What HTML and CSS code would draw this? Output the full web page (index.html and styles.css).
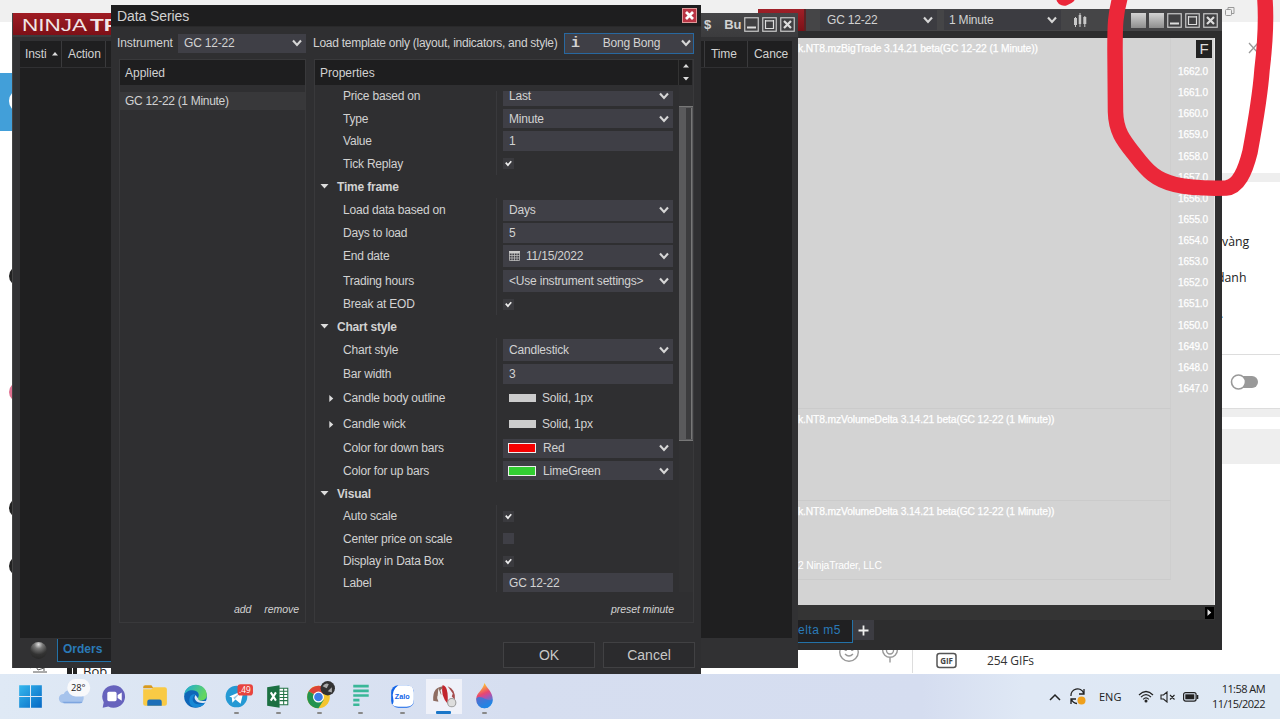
FILE: index.html
```html
<!DOCTYPE html>
<html lang="en">
<head>
<meta charset="utf-8">
<title>Data Series</title>
<link rel="stylesheet" href="styles.css">
</head>
<body>
<svg class="defs" width="0" height="0">
  <defs>
    <symbol id="chev" viewBox="0 0 10 8"><path d="M1 1.500 L5 6 L9 1.500" fill="none" stroke="#d6d6d6" stroke-width="2.100"/></symbol>
    <symbol id="check" viewBox="0 0 10 10"><path d="M2.500 4.200 L4.500 6.500 L7.500 3" fill="none" stroke="#eee" stroke-width="1.500"/></symbol>
    <symbol id="down" viewBox="0 0 8 5"><path d="M0 0H8L4 4.500Z" fill="#ddd"/></symbol>
    <symbol id="right" viewBox="0 0 5 8"><path d="M0 0V8L4.500 4Z" fill="#ddd"/></symbol>
    <symbol id="wmin" viewBox="0 0 15 15"><rect x=".75" y=".75" width="13.500" height="13.500" fill="#404042" stroke="#c9c9c9" stroke-width="1.200"/><path d="M3 10.500h9" stroke="#ddd" stroke-width="2"/></symbol>
    <symbol id="wmax" viewBox="0 0 15 15"><rect x=".75" y=".75" width="13.500" height="13.500" fill="#404042" stroke="#c9c9c9" stroke-width="1.200"/><path d="M3.500 3v8.500h8V3M3 3.800h9" fill="none" stroke="#ddd" stroke-width="1.200"/></symbol>
    <symbol id="wclose" viewBox="0 0 15 15"><rect x=".75" y=".75" width="13.500" height="13.500" fill="#404042" stroke="#c9c9c9" stroke-width="1.200"/><path d="M4 4l7 7M11 4l-7 7" stroke="#ddd" stroke-width="2.200"/></symbol>
  </defs>
</svg>
<div class="desktop">
  <div class="page-left">
    <div class="page-top"></div>
    <div class="blue-tile"><i></i></div>
    <i class="dot d1"></i><i class="dot d2"></i><i class="dot d3"></i><i class="dot d4"></i>
    <div class="contact">
      <svg width="18" height="12" viewBox="0 0 18 12"><path d="M0 5l5-3 3 5 6-2v3M3 9h14" fill="none" stroke="#555" stroke-width="1"/></svg>
      <svg class="horn" width="12" height="14" viewBox="0 0 12 14"><path d="M0 4h2l3-3v12l-3-3H0zM6 1h4v12H6z" fill="#222"/></svg>
      <span>Bob</span>
    </div>
    <div class="composer">
      <svg width="22" height="22" viewBox="0 0 22 22" fill="none" stroke="#999" stroke-width="1.400"><circle cx="11" cy="11" r="9.300"/><path d="M7 13q4 4 8 0"/><circle cx="7.800" cy="8.500" r=".8"/><circle cx="14.200" cy="8.500" r=".8"/></svg>
      <svg class="mic" width="18" height="22" viewBox="0 0 18 22" fill="none" stroke="#999" stroke-width="1.400"><rect x="5.500" y="0" width="7" height="13" rx="3.500"/><path d="M1.500 8c0 11 15 11 15 0M9 16.500v5"/></svg>
      <div class="gifs">
        <svg width="22" height="17" viewBox="0 0 22 17"><rect x="1" y="1.500" width="19" height="14" rx="2.500" fill="none" stroke="#555" stroke-width="1.500"/><text x="10.500" y="12" text-anchor="middle" class="gif-text">GIF</text></svg>
        <span>254 GIFs</span>
      </div>
    </div>
  </div>
  <div class="page-right">
    <div class="r-top"><svg width="12" height="11" viewBox="0 0 12 11" fill="none" stroke="#999"><rect x="1.500" y="3.500" width="6" height="6" rx="1"/><path d="M4 3V1.500h6v6H8"/></svg></div>
    <div class="r-close"><svg width="12" height="12" viewBox="0 0 12 12"><path d="M2 1l9 10M2 11l9-10" stroke="#999" stroke-width="1.300"/></svg></div>
    <div class="r-band"></div>
    <div class="r-text"><p>vàng</p><p class="cut">danh</p><p class="stop">.</p></div>
    <div class="r-toggle"><svg width="30" height="18" viewBox="0 0 30 18"><rect x="8" y="3" width="20" height="12" rx="6" fill="#999"/><circle cx="8.500" cy="9" r="7" fill="#fff" stroke="#999" stroke-width="1.600"/></svg></div>
    <div class="r-strip"></div>
    <div class="r-block"></div>
  </div>

  <section class="win chart-win">
    <header class="chart-bar">
      <div class="red-cap"></div>
      <div class="cb-sel s1"><span>GC 12-22</span><svg width="10" height="8"><use href="#chev"/></svg></div>
      <div class="cb-sel s2"><span>1 Minute</span><svg width="10" height="8"><use href="#chev"/></svg></div>
      <svg class="bars" width="14" height="16" viewBox="0 0 14 16" fill="#c8c8c8"><rect x="1" y="6" width="3" height="7"/><rect x="5.700" y="3" width="2.500" height="9"/><rect x="10.300" y="5" width="3" height="7"/><path d="M2 5h1v10H2zM6.500 1h1v14h-1zM11.300 4h1v11h-1z"/></svg>
      <div class="cb-btns"><i></i><i></i><svg><use href="#wmin"/></svg><svg><use href="#wmax"/></svg><svg><use href="#wclose"/></svg></div>
    </header>
    <div class="chart">
      <div class="plots">
        <div class="plot p1"><b>k.NT8.mzBigTrade 3.14.21 beta(GC 12-22 (1 Minute))</b></div>
        <div class="plot p2"><b>k.NT8.mzVolumeDelta 3.14.21 beta(GC 12-22 (1 Minute))</b></div>
        <div class="plot p3"><b>k.NT8.mzVolumeDelta 3.14.21 beta(GC 12-22 (1 Minute))</b><span>2 NinjaTrader, LLC</span></div>
      </div>
      <div class="axis">
        <div class="fix">F</div>
        <div class="prices"><b>1662.0</b><b>1661.0</b><b>1660.0</b><b>1659.0</b><b>1658.0</b><b>1657.0</b><b>1656.0</b><b>1655.0</b><b>1654.0</b><b>1653.0</b><b>1652.0</b><b>1651.0</b><b>1650.0</b><b>1649.0</b><b>1648.0</b><b>1647.0</b></div>
      </div>
    </div>
    <div class="hscroll"><i><svg width="5" height="7" viewBox="0 0 5 8"><use href="#right"/></svg></i></div>
    <div class="chart-tabs"><div class="ctab">elta m5</div><div class="plus"><svg width="11" height="11" viewBox="0 0 11 11"><path d="M5.500 .5v10M.5 5.500h10" stroke="#eee" stroke-width="1.800"/></svg></div></div>
  </section>

  <section class="win orders-win">
    <header class="orders-bar">
      <div class="brand"><svg width="140" height="22"><text x="9" y="17.500" class="brand-text" textLength="65" lengthAdjust="spacingAndGlyphs">NINJA</text><text x="77" y="17.500" class="brand-text bold" textLength="30" lengthAdjust="spacingAndGlyphs">TR</text></svg></div>
      <div class="acct"><span>$</span><span>Bu</span></div>
      <div class="wbtns"><svg><use href="#wmin"/></svg><svg><use href="#wmax"/></svg><svg><use href="#wclose"/></svg></div>
    </header>
    <div class="grid-area">
      <div class="cols"><span class="c1">Insti <svg width="6" height="4" viewBox="0 0 6 4"><path d="M0 3.500L3 0l3 3.500z" fill="#ddd"/></svg></span><span class="c2">Action</span><span class="gap"></span><span class="c3">Time</span><span class="c4">Cance</span></div>
    </div>
    <footer class="orders-tabs"><div class="ball"></div><div class="otab">Orders</div></footer>
  </section>

  <section class="win dialog">
    <header class="dlg-title"><span>Data Series</span><div class="dclose"><svg width="15" height="15" viewBox="0 0 15 15"><path d="M4 4l7 7M11 4l-7 7" stroke="#fff" stroke-width="2.800"/></svg></div></header>
    <div class="dlg-top">
      <span class="inst">Instrument</span>
      <div class="sel inst-sel"><span>GC 12-22</span><svg width="10" height="8"><use href="#chev"/></svg></div>
      <span class="tmpl">Load template only (layout, indicators, and style)</span>
      <div class="sel tmpl-sel"><em>i</em><span>Bong Bong</span><svg width="10" height="8"><use href="#chev"/></svg></div>
    </div>
    <div class="panels">
      <div class="panel applied">
        <div class="phead">Applied</div>
        <div class="item">GC 12-22 (1 Minute)</div>
        <div class="links"><i>add</i><i>remove</i></div>
      </div>
      <div class="panel props">
        <div class="phead"><span>Properties</span><div class="spin"><svg width="6" height="4" viewBox="0 0 6 4"><path d="M0 3.500L3 0l3 3.500z" fill="#ddd"/></svg><svg width="6" height="4" viewBox="0 0 6 4"><path d="M0 0h6L3 3.500z" fill="#ddd"/></svg></div></div>
        <div class="pbody">
          <div class="rows">
            <div class="inner">
              <div class="row h23"><label>Price based on</label><div class="fld"><div class="box b20">Last<svg><use href="#chev"/></svg></div></div></div>
              <div class="row h23"><label>Type</label><div class="fld"><div class="box b19">Minute<svg><use href="#chev"/></svg></div></div></div>
              <div class="row h22"><label>Value</label><div class="fld"><div class="box b20">1</div></div></div>
              <div class="row h23"><label>Tick Replay</label><div class="fld"><div class="cb"><svg><use href="#check"/></svg></div></div></div>
              <div class="row h23 head"><svg><use href="#down"/></svg><b>Time frame</b></div>
              <div class="row h24"><label>Load data based on</label><div class="fld"><div class="box b21">Days<svg><use href="#chev"/></svg></div></div></div>
              <div class="row h22"><label>Days to load</label><div class="fld"><div class="box b20">5</div></div></div>
              <div class="row h24"><label>End date</label><div class="fld"><div class="box b22"><svg class="cal" viewBox="0 0 11 10"><path d="M0 0h11v2.500H0z" fill="#ccc"/><path d="M.5 1v8.500h10V1M0 4.500h11M0 7h11M3 2v8M5.500 2v8M8 2v8" stroke="#bbb" stroke-width=".8" fill="none"/></svg>11/15/2022<svg><use href="#chev"/></svg></div></div></div>
              <div class="row h25"><label>Trading hours</label><div class="fld"><div class="box b22"><span>&lt;Use instrument settings&gt;</span><svg><use href="#chev"/></svg></div></div></div>
              <div class="row h22"><label>Break at EOD</label><div class="fld"><div class="cb"><svg><use href="#check"/></svg></div></div></div>
              <div class="row h23 head"><svg><use href="#down"/></svg><b>Chart style</b></div>
              <div class="row h24"><label>Chart style</label><div class="fld"><div class="box b22">Candlestick<svg><use href="#chev"/></svg></div></div></div>
              <div class="row h23"><label>Bar width</label><div class="fld"><div class="box b20">3</div></div></div>
              <div class="row h26 sub"><svg><use href="#right"/></svg><label>Candle body outline</label><div class="fld"><i class="sw line"></i>Solid, 1px</div></div>
              <div class="row h26 sub"><svg><use href="#right"/></svg><label>Candle wick</label><div class="fld"><i class="sw line"></i>Solid, 1px</div></div>
              <div class="row h22"><label>Color for down bars</label><div class="fld"><div class="box b19"><i class="sw red"></i>Red<svg><use href="#chev"/></svg></div></div></div>
              <div class="row h23"><label>Color for up bars</label><div class="fld"><div class="box b19"><i class="sw lime"></i>LimeGreen<svg><use href="#chev"/></svg></div></div></div>
              <div class="row h23 head"><svg><use href="#down"/></svg><b>Visual</b></div>
              <div class="row h22"><label>Auto scale</label><div class="fld"><div class="cb"><svg><use href="#check"/></svg></div></div></div>
              <div class="row h23"><label>Center price on scale</label><div class="fld"><div class="cb off"></div></div></div>
              <div class="row h22"><label>Display in Data Box</label><div class="fld"><div class="cb"><svg><use href="#check"/></svg></div></div></div>
              <div class="row h22"><label>Label</label><div class="fld"><div class="box b20">GC 12-22</div></div></div>
            </div>
          </div>
          <div class="vscroll"><div class="thumb"><i></i></div></div>
        </div>
        <div class="links preset"><i>preset minute</i></div>
      </div>
    </div>
    <div class="actions"><button>OK</button><button>Cancel</button></div>
  </section>

  <footer class="taskbar">
    <div class="apps">
      <div class="app"><svg viewBox="0 0 32 32"><defs><linearGradient id="w" x2="1" y2="1"><stop stop-color="#35b8ee"/><stop offset="1" stop-color="#0668c4"/></linearGradient></defs><path d="M5 5h10.500v10.500H5zM16.500 5H27v10.500H16.500zM5 16.500h10.500V27H5zM16.500 16.500H27V27H16.500z" fill="url(#w)"/></svg></div>
      <div class="app"><svg viewBox="0 0 32 32"><path d="M8 22.500a4.500 4.500 0 0 1 .5-9 7 7 0 0 1 12-1 5 5 0 0 1 4 10z" fill="#a6c3ec"/><path d="M7 21h20q-1 1.500-3 1.500H9z" fill="#7da5df"/><rect x="12" y="-1" width="22" height="17" rx="8" fill="#f8f9fb"/><text x="15.500" y="10.500" class="deg">28°</text></svg></div>
      <div class="app"><svg viewBox="0 0 32 32"><path d="M16 5a11 11 0 1 1-5 20.700L5.500 27l1-5.500A11 11 0 0 1 16 5" fill="#6763bd"/><rect x="10" y="11.500" width="9" height="9" rx="1.500" fill="#fff"/><path d="M20 14.500l4-2.500v8l-4-2.500z" fill="#fff"/></svg></div>
      <div class="app"><svg viewBox="0 0 32 32"><path d="M5 7q0-2 2-2h6l2 3H5z" fill="#d99a1d"/><path d="M5 9h8l2-2h11q2 0 2 2v14q0 2-2 2H7q-2 0-2-2z" fill="#f9ca45"/><path d="M9 25v-4q0-2 2-2h10q2 0 2 2v4z" fill="#1d6fb8"/></svg></div>
      <div class="app"><svg viewBox="0 0 32 32"><defs><linearGradient id="e" x2="1" y2=".4"><stop stop-color="#1aa9dd"/><stop offset="1" stop-color="#64d65e"/></linearGradient></defs><circle cx="16" cy="16" r="11" fill="#0e66b8"/><path d="M5 15C6 1 27 1 27 15c0 6-10 6-9 3 3-4 0-8-5-8-4 0-7 2-8 5" fill="url(#e)"/><path d="M16 14c-6 4-2 13 9 8l-1 2c-5 4-14 3-14-4 0-5 3-7 6-6" fill="#1789d6"/><path d="M16 14.500c-3 4 2 9 9 7.500l2-2c-5 1-9 0-8.500-2z" fill="#dce6f4"/></svg></div>
      <div class="app run"><svg viewBox="0 0 32 32"><circle cx="15" cy="16" r="10.500" fill="#2599d4"/><path d="M8 16l14-6-3 13-5-4-3 3-.5-5z" fill="#fff"/><path d="M12 17l7-5-6 7z" fill="#9fc8e4"/><rect x="16" y="4" width="15" height="11" rx="3" fill="#e8433e"/><text x="17.500" y="12.500" class="badge">.49</text></svg></div>
      <div class="app run"><svg viewBox="0 0 32 32"><path d="M16 8h9v16h-9z" fill="#fff" stroke="#237346"/><path d="M17 11h8M17 14h8M17 17h8M17 20h8M21 8v16" stroke="#237346"/><path d="M5 7l12-2v22L5 25z" fill="#1c7042"/><path d="M8.500 12l5 8M13.500 12l-5 8" stroke="#fff" stroke-width="2"/></svg></div>
      <div class="app run"><svg viewBox="0 0 32 32"><circle cx="15" cy="16.500" r="11" fill="#f4c52e"/><path d="M15 16.500L5.500 11A11 11 0 0 1 24.500 11z" fill="#dc4437"/><path d="M5.500 11A11 11 0 0 0 15 27.500l5-8-5-3z" fill="#23934f"/><circle cx="15" cy="16.500" r="5.300" fill="#fff"/><circle cx="15" cy="16.500" r="4.200" fill="#3c7be6"/><circle cx="24" cy="8" r="7" fill="#333"/><path d="M19 6q3-4 6-2l-2 4zM24 11l4-4v5z" fill="#aaa"/></svg></div>
      <div class="app run"><svg viewBox="0 0 32 32"><path d="M8 6h15M8 10.500h15M8 15h15M8 19.500h6M8 24h6" stroke="#3ab798" stroke-width="2.600"/></svg></div>
      <div class="app run"><svg viewBox="0 0 32 32"><rect x="5" y="5" width="22" height="22" rx="7" fill="#1264e8"/><path d="M12 5h8q7 0 7 7v7q0 7-7 7h-8q-4 0-6-2 2-2 1-6 -2-8 5-13" fill="#fff"/><text x="8.500" y="18.500" class="zalo">Zalo</text></svg></div>
      <div class="app run active"><svg viewBox="0 0 32 32"><path d="M6 20Q5 6 17 6l-4 4 1 4-4 2 1 5z" fill="#8f6d62"/><path d="M15 5q6 0 5 18-7-8-5-18" fill="#c2252e"/><path d="M20 6q8 3 7 13l-3-3 1-3z" fill="#a64d4e"/><path d="M11 8l4 10-5 1z" fill="#eee"/><circle cx="24" cy="22" r="4" fill="#ddd" stroke="#999"/></svg></div>
      <div class="app run"><svg viewBox="0 0 32 32"><defs><linearGradient id="p" x2=".3" y2="1"><stop offset=".15" stop-color="#ffc52f"/><stop offset=".5" stop-color="#e9476f"/><stop offset=".65" stop-color="#b94fa8"/><stop offset="1" stop-color="#1697ef"/></linearGradient></defs><path d="M16 3c3 6 8 9 8 16a8 8.500 0 0 1-16 0c0-7 6-8 8-16" fill="url(#p)"/><path d="M8 18c5-5 10 4 16 1a8 8.500 0 0 1-16 0" fill="#267fe0" opacity=".75"/></svg></div>
    </div>
    <div class="tray">
      <svg width="12" height="8" viewBox="0 0 12 8"><path d="M1 7l5-5 5 5" fill="none" stroke="#222" stroke-width="1.500"/></svg>
      <svg class="sync" width="18" height="18" viewBox="0 0 18 18"><path d="M2 8A6.500 6.500 0 0 1 14.500 5M15 1v5h-5M8 15.500Q4 15 2.500 11.500M2 16v-5h5" fill="none" stroke="#222" stroke-width="1.300"/><circle cx="12.500" cy="12.500" r="4" fill="#efa01c"/></svg>
      <span class="lang">ENG</span>
      <svg class="wifi" width="16" height="13" viewBox="0 0 16 13" fill="none" stroke="#222" stroke-width="1.200"><path d="M1 5q7-7 14 0M3 7.200q5-5 10 0M5.200 9.300q2.800-2.800 5.600 0"/><circle cx="8" cy="11" r=".9" fill="#222"/></svg>
      <svg class="vol" width="16" height="12" viewBox="0 0 16 12" fill="none" stroke="#222" stroke-width="1.100"><path d="M1 4h2.500L7 1v10L3.500 8H1zM10 4l4.500 4.500M14.500 4L10 8.500"/></svg>
      <svg class="bat" width="16" height="10" viewBox="0 0 16 10"><rect x=".6" y=".6" width="12.500" height="8.500" rx="2" fill="none" stroke="#222" stroke-width="1.200"/><rect x="2.300" y="2.300" width="9" height="5" fill="#222"/><path d="M14.500 3v4" stroke="#222" stroke-width="1.600"/></svg>
      <div class="clock"><span>11:58 AM</span><span>11/15/2022</span></div>
    </div>
  </footer>
  <svg class="scribble" width="1280" height="240" viewBox="0 0 1280 240" fill="none" stroke="#eb2739" stroke-width="15.500" stroke-linecap="round" stroke-linejoin="round"><path d="M1121 -6C1115 15 1115 25 1115 50L1115.500 112C1116 132 1124 141 1135 155C1148 172 1156 180 1175 184.500C1190 188 1208 188.500 1226 188C1238 187 1245 172 1250 152C1255 125 1260 98 1262 70C1265 45 1267 20 1264.500 -6"/><path d="M1064 -2L1068 -4"/></svg>
</div>
</body>
</html>
```
FILE: styles.css
```css
* { box-sizing: border-box; }
body { margin: 0; font-family: "Liberation Sans", Arial, sans-serif; font-size: 12px; color: #d2d2d2; }
.defs { position: absolute; }
.desktop { position: relative; width: 1280px; height: 719px; overflow: hidden; background: #fff; }
.win { position: absolute; display: flex; flex-direction: column; overflow: hidden; }
svg { display: block; flex: none; }

/* page behind the windows */
.page-left { position: absolute; inset: 0; }
.page-top { height: 22px; background: #f0f0f0; }
.blue-tile { width: 12px; height: 58px; margin-top: 51px; padding: 17px 0 0 9px; background: #429fd9; overflow: hidden; }
.blue-tile i { display: block; width: 20px; height: 22px; border-radius: 50%; background: #fff; }
.dot { position: absolute; left: 9px; width: 20px; height: 20px; border-radius: 50%; background: #222; }
.d1 { top: 266px; } .d2 { top: 382px; background: #e07090; } .d3 { top: 498px; } .d4 { top: 556px; }
.contact { position: absolute; left: 30px; top: 663px; display: flex; color: #222; font: 13px/16px "Open Sans", sans-serif; }
.horn { margin: 1px 4px 0 19px; }
.composer { position: absolute; left: 838px; top: 641px; display: flex; height: 32px; }
.mic { margin-left: 21px; }
.gifs { display: flex; align-items: center; gap: 29px; margin-left: 13px; padding: 6px 0 0 23px; border-left: 1px solid #ddd; color: #333; font: 12px "Open Sans", sans-serif; letter-spacing: -.1px; }
.gif-text { font: bold 8px "Open Sans", sans-serif; fill: #444; }
.page-right { position: absolute; left: 1222px; top: 0; width: 58px; height: 674px; background: #fff; color: #222; font: 12.300px/18px "Open Sans", sans-serif; }
.r-top { height: 22px; padding: 6px 2px; background: #f0f0f0; }
.r-close { height: 151px; padding: 20px 0 0 25px; }
.r-band { height: 9px; background: #eee; }
.r-text { height: 173px; padding-top: 51px; border-bottom: 1px solid #ddd; }
.r-text p { margin: 0 0 18px; }
.r-text .cut { margin-left: -5px; }
.r-text .stop { margin-left: -2px; }
.r-toggle { height: 53px; padding: 18px 8px; }
.r-strip { height: 9px; background: #eee; border-top: 1px solid #ddd; }
.r-block { height: 35px; margin-top: 12px; background: #eee; }

/* chart window */
.chart-win { left: 758px; top: 9px; width: 464px; height: 641px; background: #2d2d2e; }
.chart-bar { display: flex; align-items: center; height: 22px; background: #454547; letter-spacing: -.2px; }
.red-cap { width: 48px; height: 22px; background: linear-gradient(#a02028, #7d1117); border-right: 2px solid #5c2224; }
.cb-sel { display: flex; align-items: center; justify-content: space-between; height: 20px; background: #3c3c41; padding: 0 4px 0 6px; }
.s1 { width: 117px; margin-left: 14px; padding-left: 7px; }
.s2 { width: 117px; margin-left: 7px; padding-left: 5px; }
.bars { margin-left: 12px; }
.cb-btns { display: flex; gap: 3px; margin-left: auto; padding-right: 4px; }
.cb-btns i { width: 15px; height: 15px; background: linear-gradient(#d3d3d3, #8e8e8e); }
.cb-btns svg, .wbtns svg { width: 15px; height: 15px; }
.chart { display: flex; height: 567px; margin: 7px 7px 0 40px; background: #d3d3d3; border-right: 1px solid #e8e8e8; }
.plots { flex: 1; }
.plot { border-bottom: 1px solid #cbcbcb; border-right: 1px solid #cecece; color: #fff; font-size: 10.300px; letter-spacing: -.13px; padding-top: 5px; line-height: 12px; display: flex; flex-direction: column; white-space: nowrap; }
.p1 { height: 371px; } .p2 { height: 92px; } .p3 { height: 79px; }
.p3 span { margin-top: 42px; }
.plot b { font-weight: normal; -webkit-text-stroke: .25px #fff; }
.axis { width: 43px; display: flex; flex-direction: column; align-items: flex-end; padding: 2px 2px 0 0; }
.fix { width: 16px; height: 18px; background: #222; color: #ddd; font-size: 15px; line-height: 18px; text-align: center; }
.prices { display: flex; flex-direction: column; margin-top: 3px; padding-right: 4px; color: #fff; font-size: 10px; }
.prices b { height: 21.130px; line-height: 21.130px; font-weight: normal; letter-spacing: -.1px; -webkit-text-stroke: .25px #fff; }
.hscroll { height: 15px; margin: 0 7px 0 40px; background: #343434; display: flex; justify-content: flex-end; align-items: center; }
.hscroll i { width: 9px; height: 12px; background: #000; display: flex; align-items: center; justify-content: center; margin-right: 1px; }
.chart-tabs { display: flex; padding: 0 0 0 40px; height: 30px; }
.ctab { width: 55px; height: 23px; background: #202022; border-right: 1px solid #2372a8; border-bottom: 1px solid #2372a8; color: #2a7ab8; line-height: 21px; letter-spacing: .5px; }
.plus { width: 21px; height: 20px; background: #3c3c42; display: flex; align-items: center; justify-content: center; }

/* orders window */
.orders-win { left: 12px; top: 13px; width: 786px; height: 655px; background: #313133; border-left: 1px solid #444; }
.orders-bar { display: flex; align-items: center; height: 24px; padding-bottom: 2px; background: linear-gradient(#464648, #3b3b3d); }
.brand { width: 140px; height: 22px; background: linear-gradient(#a01c24, #7d1017); align-self: flex-start; }
.brand-text { font-size: 17px; fill: #f1e6e6; }
.bold { font-weight: bold; }
.acct { display: flex; gap: 13px; margin-left: 551px; width: 40px; font-size: 13px; font-weight: bold; }
.wbtns { display: flex; gap: 3px; width: 54px; }
.grid-area { height: 597px; margin: 4px 6px 0 7px; background: #1f1f20; }
.cols { display: flex; height: 27px; line-height: 27px; border-bottom: 1px solid #303032; letter-spacing: -.1px; }
.cols span { border-right: 1px solid #3a3a3c; padding-left: 5px; overflow: hidden; white-space: nowrap; }
.c1 { width: 42px; display: flex; align-items: center; gap: 5px; }
.cols .c2 { width: 44px; padding-left: 6px; }
.gap { flex: 1; }
.cols .c3 { width: 43px; padding-left: 6px; } .cols .c4 { width: 44px; padding-left: 6px; border: 0; }
.orders-tabs { display: flex; align-items: flex-start; padding-top: 1px; height: 30px; }
.ball { width: 17px; height: 17px; margin: 3px 10px 0 17px; border-radius: 50%; background: radial-gradient(circle at 50% 15%, #ddd 0, #777 25%, #333 60%, #222 100%); }
.otab { width: 90px; height: 23px; background: #202022; border-left: 1px solid #2372a8; border-bottom: 1px solid #2372a8; color: #2a7ab8; padding-left: 5px; line-height: 21px; font-weight: bold; }

/* data series dialog */
.dialog { left: 111px; top: 5px; width: 590px; height: 669px; background: #2f2f31; letter-spacing: -.2px; }
.dlg-title { display: flex; justify-content: space-between; align-items: center; height: 22px; padding: 0 4px 0 6px; background: #1e1e1f; border-bottom: 1px solid #29292a; font-size: 14px; letter-spacing: -.1px; }
.dclose { width: 15px; height: 15px; background: #b93444; outline: 1px solid #d99; outline-offset: -1px; }
.dlg-top { display: flex; align-items: center; height: 22px; margin-top: 5px; padding-left: 6px; white-space: nowrap; }
.inst { width: 61px; letter-spacing: -.1px; }
.sel { display: flex; align-items: center; justify-content: space-between; height: 19px; background: #3f3f46; padding: 0 4px 0 6px; }
.inst-sel { width: 128px; }
.tmpl { width: 251px; padding-left: 7px; margin-right: 7px; letter-spacing: -.26px; }
.tmpl-sel { width: 130px; height: 21px; border: 1px solid #2868a0; padding: 0 2px 0 6px; }
.tmpl-sel em { font: bold 15px "Liberation Mono", monospace; width: 8px; }
.tmpl-sel span { margin-left: 3px; }
.panels { display: flex; gap: 8px; margin: 5px 7px 0 8px; }
.panel { height: 564px; border: 1px solid #39393b; display: flex; flex-direction: column; }
.applied { width: 187px; }
.props { width: 380px; }
.phead { display: flex; justify-content: space-between; height: 25px; line-height: 26px; padding-left: 5px; background: #1e1e1f; flex: none; letter-spacing: 0; }
.props .phead { margin-right: 1px; }
.spin { width: 14px; display: flex; flex-direction: column; justify-content: space-between; align-items: center; padding: 4px 0; border-left: 1px solid #333; }
.item { height: 18px; line-height: 18px; margin-top: 7px; padding-left: 5px; background: #38383a; letter-spacing: -.3px; }
.links { display: flex; justify-content: flex-end; gap: 13px; margin-top: auto; padding: 0 6px 5px; font-size: 10.500px; line-height: 15px; letter-spacing: -.05px; }
.preset { padding-right: 19px; }
.pbody { display: flex; height: 507px; }
.rows { width: 364px; height: 501px; margin-top: 6px; overflow: hidden; }
.inner { margin-top: -7px; }
.row { display: flex; align-items: center; padding-left: 28px; white-space: nowrap; }
.row label { width: 153px; flex: none; }
.h22 { height: 22px; } .h23 { height: 23px; } .h24 { height: 24px; } .h25 { height: 25px; } .h26 { height: 26px; }
.fld { display: flex; align-items: center; align-self: stretch; width: 177px; border-left: 1px solid #39393c; padding-left: 6px; }
.box { display: flex; align-items: center; width: 170px; background: #3f3f46; padding-left: 6px; }
.b19 { height: 19px; } .b20 { height: 20px; } .b21 { height: 21px; } .b22 { height: 22px; }
.box > svg { width: 10px; height: 8px; margin-left: auto; margin-right: 4px; }
.box .cal { width: 11px; height: 10px; margin: 0 6px 0 0; }
.cb { width: 11px; height: 11px; background: #3a3a3e; }
.cb svg { width: 11px; height: 11px; }
.cb.off { background: #3f3f46; }
.head { padding-left: 5px; gap: 8px; }
.head svg { width: 9px; height: 5px; }
.sub { padding-left: 14px; }
.sub > svg { width: 5px; height: 7px; margin-right: 9px; }
.sub .fld { padding-left: 12px; }
.sw { width: 27px; height: 8px; margin-right: 6px; background: #ccc; }
.sw.red, .sw.lime { width: 28px; height: 10px; margin: 0 7px 0 -1px; border: 1px solid #eee; background: #f50000; }
.sw.lime { background: #32cd32; }
.vscroll { width: 14px; padding-top: 21px; background: #313133; }
.thumb { height: 335px; width: 14px; padding: 1px 1px 1px 7px; background: #5a5a5c; border: 1px solid #777; border-width: 1px 0; }
.thumb i { display: block; height: 100%; background: #3c3c3e; border-right: 1px solid #777; }
.actions { display: flex; gap: 8px; margin: 19px 0 0 392px; }
.actions button { width: 92px; height: 26px; padding: 0; border: 1px solid #414143; background: #2b2b2d; color: #c8c8c8; font: 14px "Liberation Sans", sans-serif; }

/* taskbar */
.taskbar { position: absolute; left: 0; top: 674px; width: 1280px; height: 45px; display: flex; justify-content: space-between; background: linear-gradient(90deg, #dfe9f5, #d6def0 40%, #d5ddf0 72%, #dfe8f5 80%, #dfe9f4); color: #222; font-family: "Open Sans", sans-serif; }
.apps { display: flex; padding-left: 10px; }
.app { position: relative; width: 41.300px; display: flex; justify-content: center; align-items: center; padding-bottom: 1px; }
.app svg { position: relative; width: 33px; height: 33px; overflow: visible; }
.run::after { content: ""; position: absolute; left: 18px; bottom: 5px; width: 5px; height: 2px; border-radius: 1px; background: #888; }
.active { background: linear-gradient(#eff1f9, #eff1f9) center 5px / 36px 35px no-repeat; }
.active::after { left: 13px; width: 15px; height: 3px; background: #1a76c8; }
.deg { font: 9px "Open Sans", sans-serif; fill: #222; }
.badge { font: 8px "Open Sans", sans-serif; fill: #fff; }
.zalo { font: bold 7px "Liberation Sans", sans-serif; fill: #1264e8; }
.tray { display: flex; align-items: center; padding-right: 15px; }
.sync { margin: 0 12px 0 8px; }
.lang { font-size: 11px; width: 21px; }
.wifi { margin-left: 18px; }
.vol { margin-left: 6px; }
.bat { margin-left: 7px; }
.clock { width: 66px; display: flex; flex-direction: column; align-items: flex-end; font-size: 11px; line-height: 15px; padding-bottom: 1px; }
.clock span { letter-spacing: -.55px; }
.scribble { position: absolute; left: 0; top: 0; }
```
